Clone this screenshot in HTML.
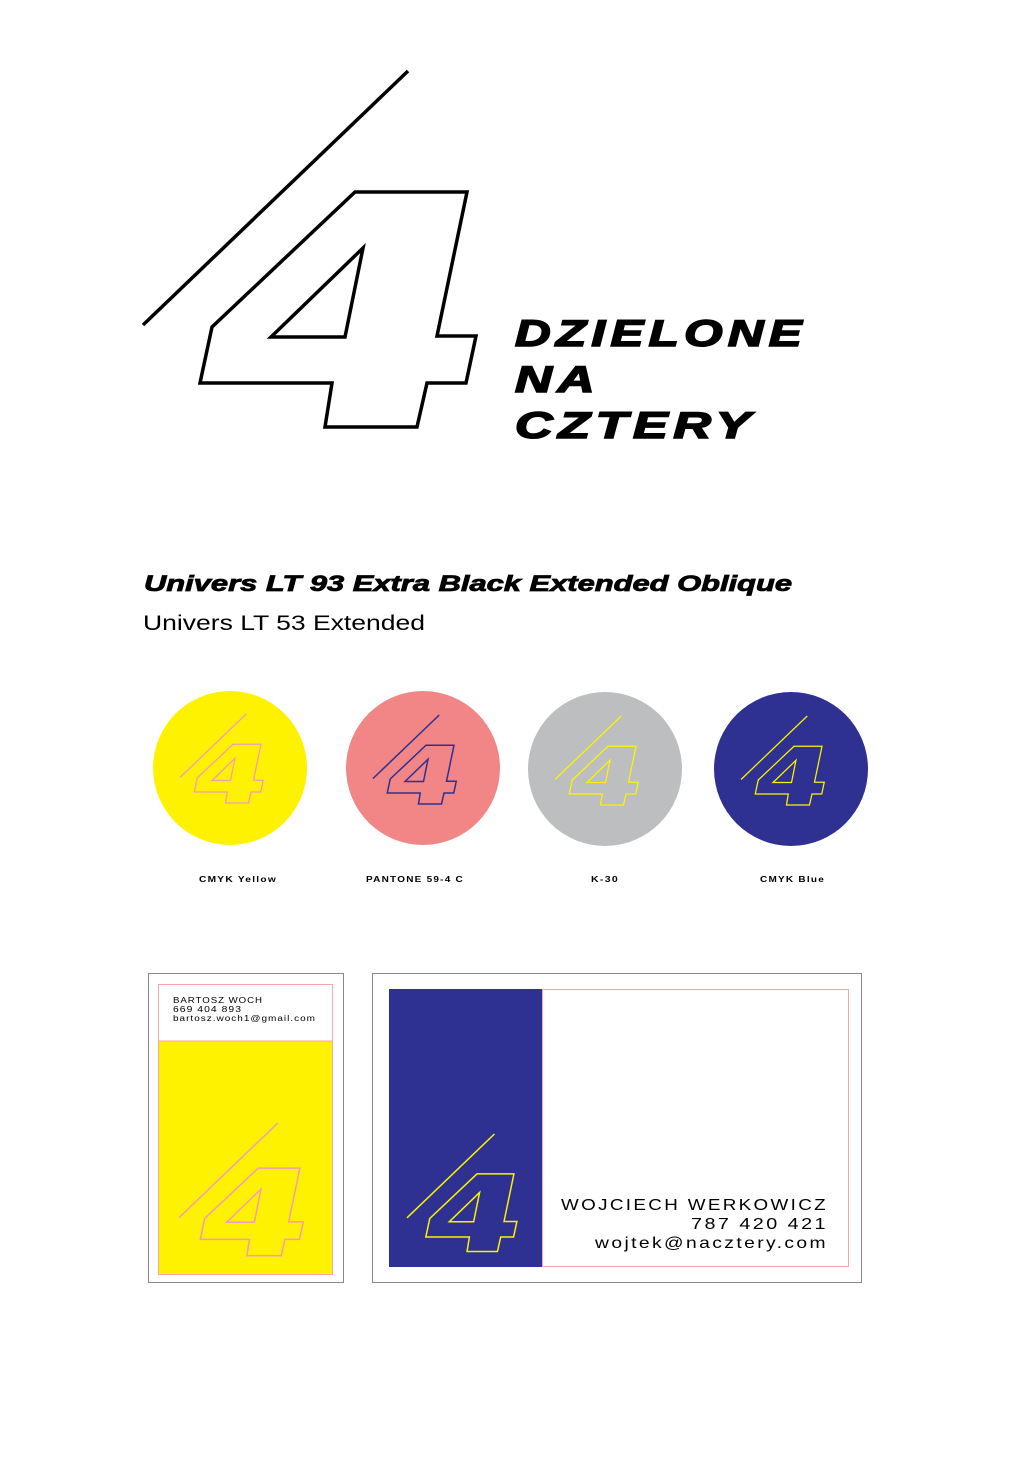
<!DOCTYPE html>
<html><head><meta charset="utf-8"><style>
html,body{margin:0;padding:0;background:#fff;}
svg{display:block}
</style></head><body>
<svg width="1017" height="1458" viewBox="0 0 1017 1458" xmlns="http://www.w3.org/2000/svg">
<defs>
<g id="logo" fill="none">
<line x1="143" y1="325" x2="408" y2="71"/>
<polygon points="355,192 467,192 437,336 476,336 466,383 427,383 417,427 325,427 332,383 200,383 212,327"/>
<polygon points="363,248 345,337 271,337"/>
</g>
</defs>
<rect width="1017" height="1458" fill="#fff"/>

<use href="#logo" stroke="#000" stroke-width="3.5"/>

<g font-family="Liberation Sans, sans-serif" font-weight="bold" font-style="italic" fill="#000" stroke="#000" stroke-width="1.6" font-size="37" letter-spacing="4">
<text x="515" y="346" textLength="292" lengthAdjust="spacingAndGlyphs">DZIELONE</text>
<text x="515" y="392" textLength="85" lengthAdjust="spacingAndGlyphs">NA</text>
<text x="515" y="438" textLength="241" lengthAdjust="spacingAndGlyphs">CZTERY</text>
</g>

<text x="144" y="591" font-family="Liberation Sans, sans-serif" font-weight="bold" font-style="italic" font-size="22" stroke="#000" stroke-width="0.8" textLength="648" lengthAdjust="spacingAndGlyphs">Univers LT 93 Extra Black Extended Oblique</text>
<text x="143" y="630" font-family="Liberation Sans, sans-serif" font-size="21" textLength="282" lengthAdjust="spacingAndGlyphs">Univers LT 53 Extended</text>

<circle cx="230" cy="768" r="77" fill="#fff200"/>
<circle cx="423" cy="768" r="77" fill="#f28585"/>
<circle cx="605" cy="769" r="77" fill="#bcbec0"/>
<circle cx="791" cy="769" r="77" fill="#2e3192"/>
<use href="#logo" stroke="#f49ac1" stroke-width="5" transform="translate(180,714) scale(0.25) translate(-143,-71)"/>
<use href="#logo" stroke="#2e3192" stroke-width="6" transform="translate(373,715) scale(0.25) translate(-143,-71)"/>
<use href="#logo" stroke="#fff200" stroke-width="5" transform="translate(555,716) scale(0.25) translate(-143,-71)"/>
<use href="#logo" stroke="#fff200" stroke-width="5" transform="translate(741,716) scale(0.25) translate(-143,-71)"/>

<g font-family="Liberation Sans, sans-serif" font-weight="bold" font-size="8" fill="#000" letter-spacing="1">
<text x="199" y="882" textLength="78" lengthAdjust="spacingAndGlyphs">CMYK Yellow</text>
<text x="366" y="882" textLength="98" lengthAdjust="spacingAndGlyphs">PANTONE 59-4 C</text>
<text x="591" y="882" textLength="28" lengthAdjust="spacingAndGlyphs">K-30</text>
<text x="760" y="882" textLength="65" lengthAdjust="spacingAndGlyphs">CMYK Blue</text>
</g>

<!-- left card -->
<rect x="148.5" y="973.5" width="195" height="309" fill="#fff" stroke="#888" stroke-width="1"/>
<rect x="158" y="1041" width="175" height="234" fill="#fff200"/>
<rect x="158.5" y="984.5" width="174" height="290" fill="none" stroke="#f7a6aa" stroke-width="1"/>
<line x1="158" y1="1041" x2="333" y2="1041" stroke="#f7a6aa" stroke-width="1"/>
<g font-family="Liberation Sans, sans-serif" font-size="8" fill="#000" letter-spacing="0.8">
<text x="173" y="1003" textLength="90" lengthAdjust="spacingAndGlyphs">BARTOSZ WOCH</text>
<text x="173" y="1012" textLength="69" lengthAdjust="spacingAndGlyphs">669 404 893</text>
<text x="173" y="1021" textLength="143" lengthAdjust="spacingAndGlyphs">bartosz.woch1@gmail.com</text>
</g>
<use href="#logo" stroke="#f49ac1" stroke-width="4" transform="translate(179,1123) scale(0.373) translate(-143,-71)"/>

<!-- right card -->
<rect x="372.5" y="973.5" width="489" height="309" fill="#fff" stroke="#888" stroke-width="1"/>
<rect x="389" y="989" width="153" height="278" fill="#2e3192"/>
<rect x="542.5" y="989.5" width="306" height="277" fill="none" stroke="#f7a6aa" stroke-width="1"/>
<use href="#logo" stroke="#fff200" stroke-width="4.5" transform="translate(407,1134) scale(0.33) translate(-143,-71)"/>
<g font-family="Liberation Sans, sans-serif" font-size="16" fill="#000" letter-spacing="2">
<text x="561" y="1210" textLength="267" lengthAdjust="spacingAndGlyphs">WOJCIECH WERKOWICZ</text>
<text x="691" y="1229" textLength="137" lengthAdjust="spacingAndGlyphs">787 420 421</text>
<text x="595" y="1248" textLength="233" lengthAdjust="spacingAndGlyphs">wojtek@nacztery.com</text>
</g>
</svg>
</body></html>
